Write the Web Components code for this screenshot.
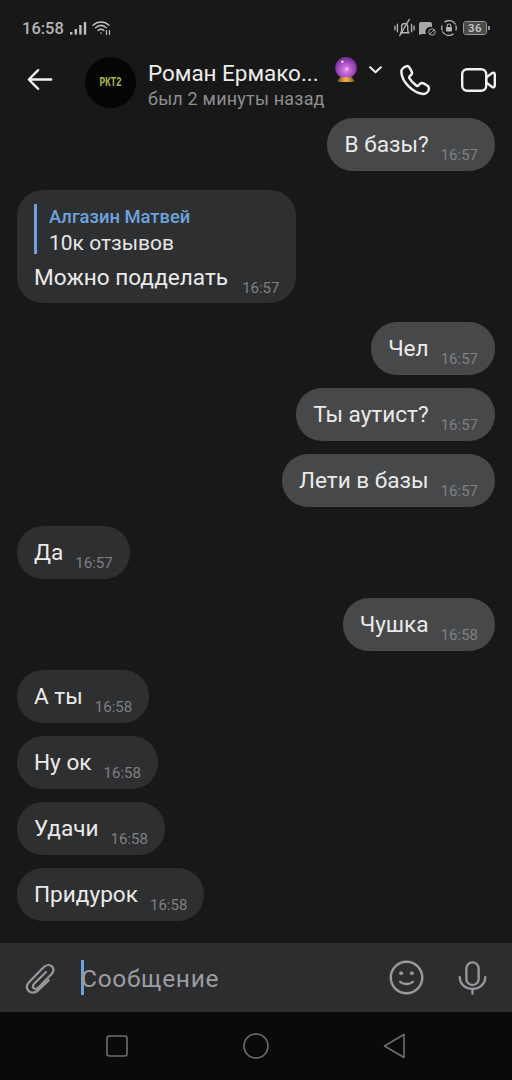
<!DOCTYPE html>
<html lang="ru"><head><meta charset="utf-8"><style>
html,body{margin:0;padding:0;background:#181818;}
body{width:512px;height:1080px;overflow:hidden;font-family:Roboto,"Liberation Sans",sans-serif;}
app-screen{height:1080px}
</style></head><body>
<app-screen>
<status-bar slot="top"></status-bar>
<chat-header slot="top" name="Роман Ермако..." sub="был 2 минуты назад"></chat-header>
<chat-msg side="out" time="16:57">В базы?</chat-msg>
<chat-msg side="in" time="16:57" gap="19" quote-author="Алгазин Матвей" quote-text="10к отзывов">Можно подделать</chat-msg>
<chat-msg side="out" time="16:57" gap="19">Чел</chat-msg>
<chat-msg side="out" time="16:57" gap="13">Ты аутист?</chat-msg>
<chat-msg side="out" time="16:57" gap="13">Лети в базы</chat-msg>
<chat-msg side="in" time="16:57" gap="19">Да</chat-msg>
<chat-msg side="out" time="16:58" gap="19">Чушка</chat-msg>
<chat-msg side="in" time="16:58" gap="19">А ты</chat-msg>
<chat-msg side="in" time="16:58" gap="13">Ну ок</chat-msg>
<chat-msg side="in" time="16:58" gap="13">Удачи</chat-msg>
<chat-msg side="in" time="16:58" gap="13">Придурок</chat-msg>
<chat-input slot="bottom" placeholder="Сообщение"></chat-input>
<nav-bar slot="bottom"></nav-bar>
</app-screen>
<script>
function def(name, html){
  customElements.define(name, class extends HTMLElement{
    connectedCallback(){
      if(this.shadowRoot) return;
      const r=this.attachShadow({mode:'open'});
      r.innerHTML=typeof html==='function'?html(this):html;
    }
  });
}
def('app-screen',`<style>
:host{display:flex;flex-direction:column;width:512px;background:#181818;overflow:hidden}
.list{flex:1;min-height:0;display:flex;flex-direction:column;justify-content:flex-end;padding:0 17px 22px;overflow:hidden}
</style><slot name="top"></slot><div class="list"><slot></slot></div><slot name="bottom"></slot>`);

def('status-bar',`<style>
:host{display:flex;align-items:center;height:56px;padding:0 22px;box-sizing:border-box;color:#b4b4b4;font:500 16.5px Roboto,sans-serif;background:#181818;flex:none}
.l,.r{display:flex;align-items:center}
.l span{margin-right:6px}
.l svg+svg{margin-left:5px}
.r{margin-left:auto}
svg{display:block;flex:none}
.bat{width:22px;height:12px;border:1px solid #9a9a9a;border-radius:3px;display:flex;padding:0;margin-left:6px;overflow:hidden}
.bat span{flex:1;background:#4a4a4a;font:500 11.5px/12px Roboto,sans-serif;text-align:center;color:#c8c8c8;letter-spacing:.4px}
.tip{width:2px;height:4px;background:#9a9a9a;border-radius:0 1px 1px 0;margin-left:1px}
</style>
<div class="l"><span>16:58</span>
<svg width="17" height="14" viewBox="0 0 17 14" fill="#bdbdbd"><rect x="0" y="11" width="2.4" height="2.6"/><rect x="4.6" y="8" width="2.4" height="5.6"/><rect x="9.2" y="4" width="2.4" height="9.6"/><rect x="13.8" y="1" width="2.4" height="12.6"/></svg>
<svg width="20" height="16" viewBox="0 0 20 16" fill="none" stroke="#bdbdbd" stroke-width="1.5" stroke-linecap="round"><path d="M1 5.2C5.6 .9 12.4 .9 17 5.2"/><path d="M3.6 7.8c3.300-3 7.500-3 10.800 0"/><path d="M6.200 10.400c1.900-1.600 3.700-1.600 5.600 0"/><path d="M9 13v.2"/><path d="M14.500 10.500v4M17.500 10.500v4" stroke-width="1.200"/></svg>
</div>
<div class="r">
<svg width="21" height="20" viewBox="0 0 22 20" fill="none" stroke="#b4b4b4" stroke-width="1.400" stroke-linecap="round"><path d="M1 8v4M3.600 6v8M18.400 6v8M21 8v4"/><path d="M7 15l1-2V8.500a3.200 3.200 0 0 1 6.400 0V13l1 2z"/><path d="M6 18L16 1"/></svg>
<svg width="15" height="13" viewBox="0 0 15 13" style="margin-left:4px"><path d="M0 2a2 2 0 0 1 2-2h9a2 2 0 0 1 2 2v3a5 5 0 0 0-6 7H3l-3 1z" fill="#a8a8a8"/></svg>
<svg width="8" height="8" viewBox="0 0 9 9" fill="none" stroke="#a8a8a8" stroke-width="1.100" style="margin:8px 0 0 -6px"><circle cx="4.500" cy="4.500" r="3.600"/><path d="M2 7l5-5"/></svg>
<svg width="16" height="16" viewBox="0 0 16 16" fill="none" stroke="#b4b4b4" stroke-width="1.300" style="margin-left:5px"><path d="M14.600 4.500A7.200 7.200 0 0 0 3.500 2.300"/><path d="M1.400 11.500A7.200 7.200 0 0 0 12.500 13.700"/><path d="M1.200 5.500a7.200 7.200 0 0 0 0 5M14.800 5.500a7.200 7.200 0 0 1 0 5"/><rect x="5" y="7" width="6" height="4.500" rx=".8" fill="#b4b4b4" stroke="none"/><path d="M6.200 7V5.800a1.800 1.800 0 0 1 3.600 0V7" stroke-width="1.100"/></svg>
<div class="bat"><span>36</span></div><div class="tip"></div>
</div>`);

def('chat-header',el=>`<style>
:host{display:flex;align-items:center;height:62px;box-sizing:border-box;background:#181818;color:#e8e8e8;padding-bottom:10px;flex:none}
.back{margin:-5px 0 0 27px;width:26px;height:23px;flex:none}
.av{margin-left:32px;width:51px;height:51px;border-radius:50%;background:#050505;display:flex;align-items:center;justify-content:center;flex:none}
.av span{color:#a5b84a;font:700 9.5px "Liberation Mono",monospace;letter-spacing:-.2px;display:block;transform:scaleY(1.35)}
.txt{margin:4px 0 0 12px;width:187px;flex:none}
.name{font:400 22.5px/28px Roboto,sans-serif;white-space:nowrap;letter-spacing:-.05px;color:#ececec}
.sub{font:400 18px/23px Roboto,sans-serif;color:#8e8f90;white-space:nowrap;letter-spacing:.2px}
.ball{width:22px;height:25px;flex:none;margin:-25px 0 0 0}
.chev{width:15px;height:8px;flex:none;margin:-25px 0 0 11px}
.call{width:32px;height:32px;flex:none;margin:-4px 0 0 16px}
.vid{width:35px;height:24px;flex:none;margin:-4px 0 0 30px}
</style>
<svg class="back" viewBox="0 0 28 24" fill="none" stroke="#f0f0f0" stroke-width="2.600" stroke-linecap="round" stroke-linejoin="round"><path d="M12 2L2 12l10 10M2.500 12H26"/></svg>
<div class="av"><span>РКТ2</span></div>
<div class="txt"><div class="name">${el.getAttribute('name')}</div><div class="sub">${el.getAttribute('sub')}</div></div>
<svg class="ball" viewBox="0 0 24 27"><defs><radialGradient id="b" cx=".5" cy=".6" r=".62"><stop offset="0" stop-color="#e08cec"/><stop offset=".55" stop-color="#a94cc0"/><stop offset="1" stop-color="#5f2480"/></radialGradient><linearGradient id="g" x1="0" x2="1"><stop offset="0" stop-color="#8a5a1a"/><stop offset=".5" stop-color="#f0b848"/><stop offset="1" stop-color="#8a5a1a"/></linearGradient></defs><circle cx="12" cy="11.500" r="11.800" fill="url(#b)"/><circle cx="8" cy="5" r="1.400" fill="#f4d6f6"/><circle cx="13" cy="13" r="1.600" fill="#f0c0f4"/><path d="M6 22h12l3 3.500q0 1.500-2 1.500H5q-2 0-2-1.500z" fill="url(#g)"/></svg>
<svg class="chev" viewBox="0 0 16 9" fill="none" stroke="#e8e8e8" stroke-width="2.400" stroke-linecap="round" stroke-linejoin="round"><path d="M2 1.500L8 7l6-5.500"/></svg>
<svg class="call" viewBox="0 0 34 34" fill="none" stroke="#f0f0f0" stroke-width="2.600" stroke-linejoin="round"><path d="M8.500 2.200c-3 .8-6 3-6 6.300C3 19 15 31 25.800 31.800c3.300 0 5.700-2.500 6-5.300.2-1.700-.8-3-2.200-3.900l-3-1.800c-1.500-.9-3.100-.8-4.300.4l-1.600 1.600c-.7.7-1.400.7-2.200.2-3.200-2-5.600-4.600-7.500-7.900-.4-.8-.3-1.500.4-2.100l1.500-1.500c1.100-1.200 1.200-2.600.4-4L10.800 3.400C10.300 2.500 9.400 2 8.500 2.200z"/></svg>
<svg class="vid" viewBox="0 0 35 24" fill="none" stroke="#f0f0f0" stroke-width="2.400" stroke-linejoin="round"><rect x="1.200" y="1.200" width="24" height="21.600" rx="5"/><path d="M25.200 9.500l6-4.500c1.200-.8 2.600 0 2.600 1.400v11.200c0 1.400-1.400 2.200-2.600 1.400l-6-4.500z"/></svg>`);

def('chat-msg',el=>{
  const out=el.getAttribute('side')==='out';
  const qa=el.getAttribute('quote-author');
  const q=qa?`<div class="q"><div class="a">${qa}</div><div class="t">${el.getAttribute('quote-text')}</div></div>`:'';
  return `<style>
:host{display:flex;flex:none;justify-content:${out?'flex-end':'flex-start'};margin-top:${el.getAttribute('gap')||0}px}
.b{background:${out?'#47484a':'#2e2f31'};color:#eaeaea;border-radius:26px;padding:${qa?'14px':'13px'} 17px ${qa?'12px':'13px'} 17px;box-sizing:border-box}
.q{border-left:3px solid #6ea2dd;padding-left:12px;margin-bottom:10px;height:50px;box-sizing:border-box}
.a{color:#6ea2dd;font:500 18.4px/25px Roboto,sans-serif;white-space:nowrap}
.t{font:400 21px/28px Roboto,sans-serif;color:#e6e6e6;white-space:nowrap}
.row{display:flex;align-items:flex-start;height:27px}
.m{font:400 22.6px/27px Roboto,sans-serif;white-space:nowrap}
.tm{font:400 15px/16px Roboto,sans-serif;color:#7f8082;margin-left:${qa?14:12}px;padding-top:16px;white-space:nowrap}
</style><div class="b">${q}<div class="row"><span class="m"><slot></slot></span><span class="tm">${el.getAttribute('time')}</span></div></div>`;
});

def('chat-input',el=>`<style>
:host{display:flex;align-items:center;height:69px;background:#2c2d2f;flex:none}
.clip{width:30px;height:34px;margin-left:25px;flex:none}
.caret{width:3px;height:35px;background:#6ea2dd;margin-left:26px;flex:none}
.ph{font:400 24.500px/30px Roboto,sans-serif;color:#9c9ea0;margin:2px 0 0 -3px;letter-spacing:.7px}
.smile{width:35px;height:35px;margin-left:auto;flex:none}
.mic{width:29px;height:34px;margin-left:34px;margin-right:25px;flex:none}
</style>
<svg class="clip" viewBox="0 0 34 36" fill="none" stroke="#96989a" stroke-width="2.500" stroke-linecap="round" stroke-linejoin="round"><path d="M27 20.500L14.500 32.300c-3.700 3.400-8.800 3-11-.2-2-2.900-1.600-6.500 1-9.200L20.800 6.200c2.900-3 7-3.700 9.700-1.300 2.600 2.400 2.200 6-.6 8.900L15 29c-1.700 1.700-3.900 1.800-5.200.5-1.200-1.300-1-3.200.6-4.900l13.400-13.400"/></svg>
<div class="caret"></div><div class="ph">${el.getAttribute('placeholder')}</div>
<svg class="smile" viewBox="0 0 36 36" fill="none" stroke="#96989a" stroke-width="2.500" stroke-linecap="round"><circle cx="18" cy="18" r="16.200"/><path d="M11.500 22.500c3.500 3 9.500 3 13 0"/><circle cx="12.500" cy="13.500" r="2" fill="#96989a" stroke="none"/><circle cx="23.500" cy="13.500" r="2" fill="#96989a" stroke="none"/></svg>
<svg class="mic" viewBox="0 0 30 36" fill="none" stroke="#96989a" stroke-width="2.500" stroke-linecap="round"><rect x="8.500" y="1.500" width="13" height="24" rx="6.500"/><path d="M1.500 17c0 7.500 6 12.500 13.500 12.500S28.500 24.500 28.500 17"/><path d="M15 29.500v5"/></svg>`);

def('nav-bar',`<style>
:host{display:flex;align-items:center;height:68px;background:#0a0a0a;flex:none}
svg{display:block;flex:none}
</style>
<svg width="22" height="22" viewBox="0 0 22 22" fill="none" stroke="#6e6e6e" stroke-width="1.600" style="margin-left:106px"><rect x="1" y="1" width="20" height="20" rx="2.500"/></svg>
<svg width="26" height="26" viewBox="0 0 26 26" fill="none" stroke="#6e6e6e" stroke-width="1.600" style="margin-left:115px"><circle cx="13" cy="13" r="12"/></svg>
<svg width="23" height="26" viewBox="0 0 23 26" fill="none" stroke="#6e6e6e" stroke-width="1.600" stroke-linejoin="round" style="margin-left:114px"><path d="M1.500 13L21 1.500V24.500z"/></svg>`);
</script>
</body></html>
